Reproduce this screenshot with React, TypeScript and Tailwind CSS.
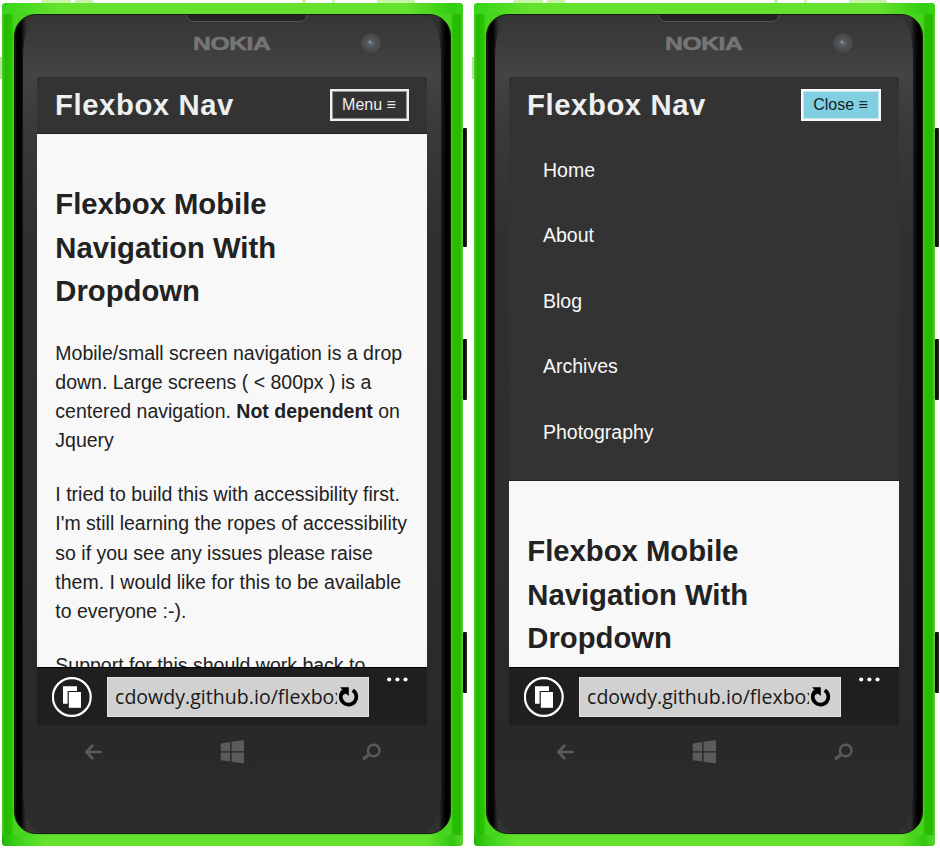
import type { ReactNode } from "react";

const sans = "font-['Liberation_Sans',Arial,sans-serif]";

function Line({ children }: { children: ReactNode }) {
  return <span className="block whitespace-nowrap">{children}</span>;
}

function Article({ headingOnly }: { headingOnly: boolean }) {
  return (
    <main className={`${sans} w-full px-[18.3px] pt-[48.8px] text-[19.5px] leading-[29.25px] text-[#222]`}>
      <h2 className="text-[29.25px] font-bold leading-[43.85px]">
        <Line>Flexbox Mobile</Line>
        <Line>Navigation With</Line>
        <Line>Dropdown</Line>
      </h2>
      {!headingOnly && (
        <>
          <p className="mt-[24.3px]">
            <Line>Mobile/small screen navigation is a drop</Line>
            <Line>down. Large screens ( &lt; 800px ) is a</Line>
            <Line>centered navigation. <strong>Not dependent</strong> on</Line>
            <Line>Jquery</Line>
          </p>
          <p className="mt-[24.4px]">
            <Line>I tried to build this with accessibility first.</Line>
            <Line>I'm still learning the ropes of accessibility</Line>
            <Line>so if you see any issues please raise</Line>
            <Line>them. I would like for this to be available</Line>
            <Line>to everyone :-).</Line>
          </p>
          <p className="mt-[24.4px]">
            <Line>Support for this should work back to</Line>
          </p>
        </>
      )}
    </main>
  );
}

function BrowserBar() {
  return (
    <footer className="flex h-[58px] shrink-0 items-start border-t border-black bg-[#1f1f1f] pl-[15px]">
      <svg className="mt-[9px] h-10 w-10 shrink-0" viewBox="0 0 40 40" fill="none">
        <circle cx="19.8" cy="20" r="18.9" stroke="#fff" strokeWidth="2.2" />
        <path d="M11 9.3H25V14H15.6V26.8H11Z" fill="#fff" />
        <path d="M16.8 15H29V30.8H16.8Z" fill="#fff" />
      </svg>
      <div className="ml-[15px] mt-[9px] flex h-[40px] w-[262px] items-center border border-[#e2e2e2] bg-[#d1d1d1] pl-[7px]">
        <span className="w-[222px] shrink-0 overflow-hidden whitespace-nowrap font-['Open_Sans','Noto_Sans',sans-serif] text-[19.5px] leading-[30px] tracking-[0.04px] text-[#181818]">
          cdowdy.github.io/flexbox
        </span>
        <svg className="ml-px h-[22px] w-[22px] shrink-0" viewBox="0 0 22 22" fill="none">
          <path d="M14.8 4.3A7.8 7.8 0 1 1 5.2 5.2" stroke="#000" strokeWidth="3.7" />
          <path d="M2.2 1.3H10.8V10L7.8 7.5L5 9L3 6.5L4.8 4.2Z" fill="#000" />
        </svg>
      </div>
      <svg className="ml-[18px] mt-[9px] h-[5px] w-[22px]" viewBox="0 0 22 5" fill="#fff">
        <circle cx="2.2" cy="2.5" r="2.1" />
        <circle cx="10.4" cy="2.5" r="2.1" />
        <circle cx="18.5" cy="2.5" r="2.1" />
      </svg>
    </footer>
  );
}

function PhoneTop() {
  return (
    <div className="relative h-[63px] shrink-0">
      <svg className="absolute left-[171px] top-0" width="124" height="9" viewBox="0 0 124 9">
        <path d="M1 0Q3 7.5 9 7.5H114Q120 7.5 123 0" fill="#252525" stroke="#555" />
      </svg>
      <div className="absolute left-[179px] top-[19px] origin-left scale-x-[1.41] whitespace-nowrap font-['Liberation_Sans',Arial,sans-serif] text-[17.5px] font-bold leading-[22px] tracking-[-0.3px] text-[#757575] [-webkit-text-stroke:0.5px_#757575]">
        NOKIA
      </div>
      <svg className="absolute left-[347px] top-[19px]" width="20" height="20" viewBox="0 0 20 20">
        <circle cx="10" cy="10" r="9.7" fill="#4a4b4c" />
        <circle cx="10" cy="10" r="6.5" fill="#505355" />
        <circle cx="9.5" cy="9.5" r="4" fill="#555c61" />
        <circle cx="9" cy="9" r="1.6" fill="#8b9297" />
        <circle cx="10.8" cy="10.8" r="1.1" fill="#737b80" />
      </svg>
    </div>
  );
}

function PhoneKeys() {
  return (
    <div className="flex h-[53px] items-center text-[#5b5b5b]">
      <svg className="ml-[70px]" width="19" height="18" viewBox="0 0 19 18" fill="none" stroke="currentColor" strokeWidth="2.6">
        <path d="M18 9H2.5M9 2L2.4 9L9 16" />
      </svg>
      <svg className="ml-[117px]" width="25" height="24" viewBox="0 0 25 24" fill="currentColor">
        <path d="M.7 3.5L10.2 2V11.2H.7ZM11.6 1.8L24 0V11.2H11.6ZM.7 12.6H10.2V21.5L.7 20.2ZM11.6 12.6H24V23.4L11.6 21.7Z" />
      </svg>
      <svg className="ml-[116px]" width="20" height="18" viewBox="0 0 20 18" fill="none" stroke="currentColor">
        <circle cx="12.7" cy="7.5" r="5.8" strokeWidth="2.4" />
        <path d="M8 11.5L2 16.2" strokeWidth="3" />
      </svg>
    </div>
  );
}

const sideButtons = "absolute left-[463px] w-[4px] rounded-[1px] bg-gradient-to-r from-black to-[#333]";

function Phone({ open = false }: { open?: boolean }) {
  return (
    <div className="relative h-[848px] w-[472px] shrink-0 pl-[2px] pt-[3px]">
      <i className="absolute left-[41px] top-0 h-[4px] w-[30px] bg-[#c7f5ab]" />
      <i className="absolute left-[75px] top-0 h-[4px] w-[18px] bg-[#c7f5ab]" />
      <i className="absolute left-[302px] top-0 h-[4px] w-[4px] bg-[#c7f5ab]" />
      <i className="absolute left-[332px] top-0 h-[4px] w-[3px] bg-[#c7f5ab]" />
      <i className="absolute left-[377px] top-0 h-[4px] w-[38px] bg-[#c7f5ab]" />
      <i className="absolute left-0 top-[57px] h-[22px] w-[3px] bg-[#b0e695]" />
      <i className={`${sideButtons} top-[128px] h-[119px]`} />
      <i className={`${sideButtons} top-[339px] h-[61px]`} />
      <i className={`${sideButtons} top-[632px] h-[61px]`} />
      <div className="relative h-[843px] w-[461px] overflow-hidden rounded-[4px] bg-[linear-gradient(90deg,#4bcc20_0,#25bb00_3px,#28c203_9px,#48d41c_12px,#48d41c_449px,#28bf03_451px,#25bb00_458px,#5bd431_461px)] pl-[12px] pt-[11px]">
        <i className="absolute left-0 top-0 h-[11px] w-full bg-[linear-gradient(90deg,#36d51b_0,#64e22d_55px,#64e22d_405px,#33cc13_450px,#37d514_100%)]" />
        <i className="absolute bottom-0 left-0 h-[11px] w-full bg-[linear-gradient(90deg,#22b805_0,#40d51d_18px,#64e22d_42px,#64e22d_425px,#32c711_450px,#58d62b_100%)]" />
        <div className="relative h-[820px] w-[437px] overflow-hidden rounded-[22px] border border-[#171b0b] bg-[linear-gradient(90deg,#191921_0,#000_2px,#020204_6px,#202020_9px,#343434_12px,#343434_400px,#303030_424px,#151515_427px,#000_431px,#000_435px)]">
          <div className="absolute left-[8px] top-0 h-full w-[418px] rounded-[18px/42px] bg-[linear-gradient(180deg,#353535_0,#444_60px,#3b3b3b_100px,#303030_220px,#2d2d2d_500px,#292929_735px,#2c2c2c_100%)]" />
          <div className="relative -ml-px -mt-px flex flex-col">
            <PhoneTop />
            <section className={`${sans} ml-[23px] flex h-[648px] w-[390px] flex-col overflow-hidden bg-[#f8f8f8]`}>
              <header className={open ? "h-[404px] shrink-0 border-b border-[#222] bg-[#333]" : "h-[57px] shrink-0 border-b border-[#222] bg-[#333]"}>
                <div className="flex h-[56px] items-center justify-between px-[18px]">
                  <h1 className="whitespace-nowrap text-[29.25px] font-bold leading-[44px] tracking-[0.6px] text-[#ecf0f1]">Flexbox Nav</h1>
                  <button className={open ? "h-[32px] w-[80px] whitespace-nowrap border-2 border-[#f8f8f8] bg-[#81cfe0] pr-px text-[16px] leading-[24px] text-[#142126] shadow-[inset_0_0_0_1px_#c0e5ed]" : "h-[32px] w-[79px] whitespace-nowrap border-2 border-[#ecf0f1] pr-px text-[16px] leading-[24px] text-[#ecf0f1] shadow-[inset_0_0_0_1px_#909393]"}>
                    {open ? "Close ≡" : "Menu ≡"}
                  </button>
                </div>
                {open && (
                  <nav className="flex flex-col pl-[34px] pt-[4.6px] text-[19.5px] leading-[65.6px] text-[#f8f8f8]">
                    <a>Home</a>
                    <a>About</a>
                    <a>Blog</a>
                    <a>Archives</a>
                    <a>Photography</a>
                  </nav>
                )}
              </header>
              <div className="min-h-0 flex-1 overflow-hidden"><Article headingOnly={open} /></div>
              <BrowserBar />
            </section>
            <PhoneKeys />
          </div>
        </div>
      </div>
    </div>
  );
}

export default function App() {
  return (
    <div className="flex h-[848px] w-[940px] overflow-hidden bg-white">
      <Phone />
      <Phone open />
    </div>
  );
}
